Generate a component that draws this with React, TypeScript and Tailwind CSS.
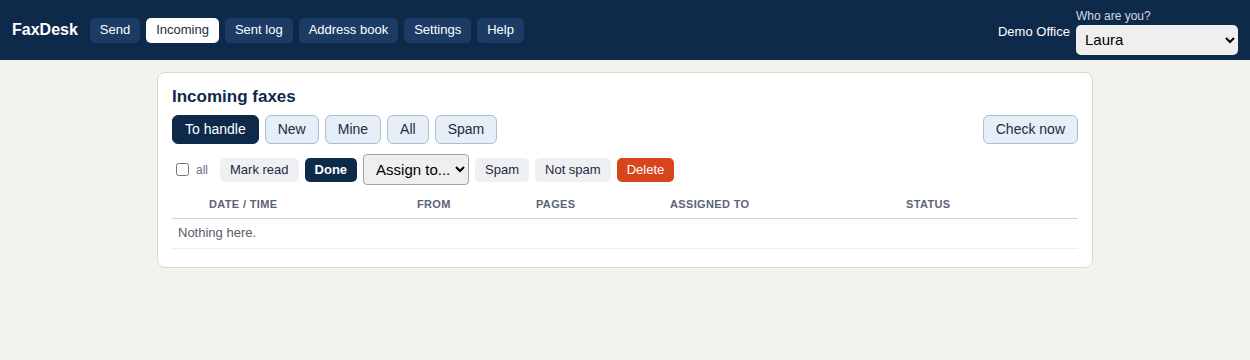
import React from "react";

export default function App() {
  const nav = ["Send", "Incoming", "Sent log", "Address book", "Settings", "Help"];
  const tabs = ["To handle", "New", "Mine", "All", "Spam"];
  const th = "h-[25px] align-top pt-[5px] text-left px-[6px] text-[11px] leading-[13px] tracking-[0.35px] font-bold text-[#5b6573] uppercase";
  return (
    <div className="min-h-[360px] bg-[#f4f2ed] font-['Liberation_Sans',Arial,sans-serif]">
      <header className="h-[60px] bg-[#0e2a4b] flex items-center px-3">
        <div className="text-white font-bold text-[16px] mr-3">FaxDesk</div>
        <nav className="flex gap-[6px]">
          {nav.map((n) =>
            n === "Incoming" ? (
              <span key={n} className="h-[25px] px-[10px] flex items-center rounded-[5px] bg-white text-[#1c2b3d] text-[13px]">
                {n}
              </span>
            ) : (
              <span key={n} className="h-[25px] px-[10px] flex items-center rounded-[5px] bg-[#1c3c65] text-white text-[13px]">
                {n}
              </span>
            )
          )}
        </nav>
        <div className="ml-auto flex items-end gap-[6px] mt-[2px]">
          <span className="text-white text-[13px] mb-[13px]">Demo Office</span>
          <div className="flex flex-col">
            <span className="text-[#cfdbe9] text-[12px] leading-[14px] mb-[2px] mt-[1px]">Who are you?</span>
            <select className="w-[162px] h-[30px] rounded-[5px] bg-[#efefef] text-black text-[15px] px-[5px]">
              <option>Laura</option>
            </select>
          </div>
        </div>
      </header>
      <main className="flex justify-center pt-[12px]">
        <div className="w-[936px] bg-white border border-[#ddd8cc] rounded-[8px] px-[14px] pt-[14px] pb-[18px]">
          <h2 className="text-[17px] font-bold text-[#0e2a4b] leading-[20px]">Incoming faxes</h2>
          <div className="flex items-center mt-[8px]">
            <div className="flex gap-[6px]">
              {tabs.map((t) =>
                t === "To handle" ? (
                  <span key={t} className="h-[29px] px-[12px] flex items-center rounded-[6px] bg-[#0e2a4b] text-white text-[14px] border border-[#0e2a4b]">
                    {t}
                  </span>
                ) : (
                  <span key={t} className="h-[29px] px-[12px] flex items-center rounded-[6px] bg-[#e6eef8] text-[#1c2b3d] text-[14px] border border-[#a9bdd5]">
                    {t}
                  </span>
                )
              )}
            </div>
            <span className="ml-auto h-[29px] px-[12px] flex items-center rounded-[6px] bg-[#e6eef8] text-[#1c2b3d] text-[14px] border border-[#a9bdd5]">
              Check now
            </span>
          </div>
          <div className="flex items-center mt-[10px] gap-[6px]">
            <label className="flex items-center gap-[7px] ml-[4px] mr-[6px]">
              <input type="checkbox" className="w-[13px] h-[13px] m-0" />
              <span className="text-[12px] text-[#6b7280]">all</span>
            </label>
            <span className="h-[24px] px-[10px] flex items-center rounded-[5px] bg-[#eef0f4] text-[#1c2b3d] text-[13px]">Mark read</span>
            <span className="h-[24px] px-[10px] flex items-center rounded-[5px] bg-[#0e2a4b] text-white font-bold text-[13px]">Done</span>
            <select className="w-[106px] h-[31px] rounded-[4px] border border-[#9ca3af] bg-[#efefef] text-black text-[15px] pl-[8px] pr-[2px]">
              <option>Assign to...</option>
            </select>
            <span className="h-[24px] px-[10px] flex items-center rounded-[5px] bg-[#eef0f4] text-[#1c2b3d] text-[13px]">Spam</span>
            <span className="h-[24px] px-[10px] flex items-center rounded-[5px] bg-[#eef0f4] text-[#1c2b3d] text-[13px]">Not spam</span>
            <span className="h-[24px] px-[10px] flex items-center rounded-[5px] bg-[#d8441c] text-white text-[13px]">Delete</span>
          </div>
          <table className="w-full table-fixed mt-[8px] border-collapse">
            <thead>
              <tr className="border-b border-[#d8d4c8]">
                <th className="w-[31px] h-[25px]"></th>
                <th className={"w-[208px] " + th}>Date / Time</th>
                <th className={"w-[119px] " + th}>From</th>
                <th className={"w-[134px] " + th}>Pages</th>
                <th className={"w-[236px] " + th}>Assigned to</th>
                <th className={th}>Status</th>
              </tr>
            </thead>
            <tbody>
              <tr className="border-b border-[#eeeeee]">
                <td colSpan={6} className="h-[30px] px-[6px] text-[13px] text-[#555d68]">Nothing here.</td>
              </tr>
            </tbody>
          </table>
        </div>
      </main>
    </div>
  );
}
